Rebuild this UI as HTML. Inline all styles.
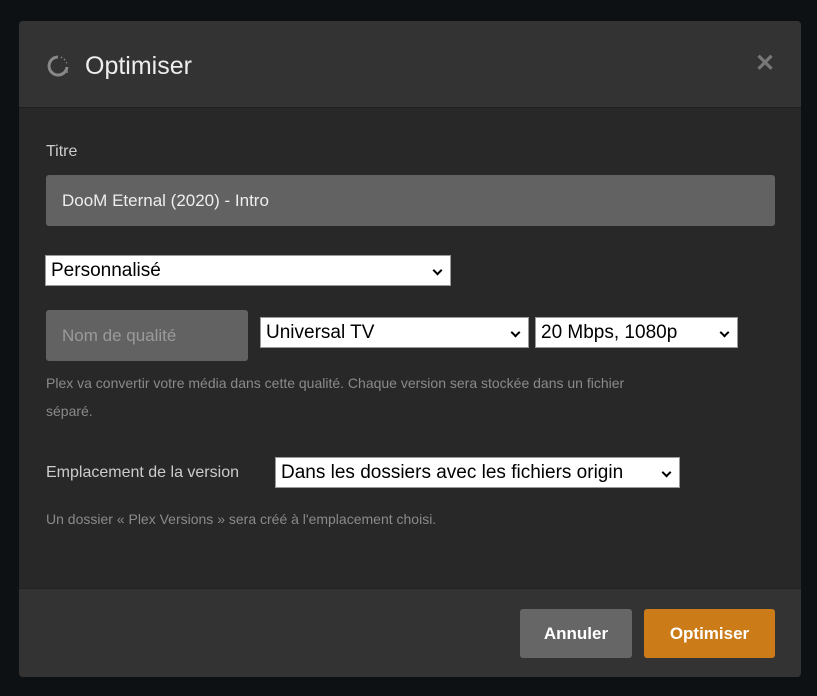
<!DOCTYPE html>
<html><head><meta charset="utf-8"><style>
*{box-sizing:border-box;margin:0;padding:0}
body{width:817px;height:696px;background:#0e1113;font-family:"Liberation Sans",sans-serif;position:relative;overflow:hidden}
.m{position:absolute;left:19px;top:21px;width:782px;height:656px;background:#282828;border-radius:4px;overflow:hidden}
.h{position:absolute;left:0;top:0;width:100%;height:87px;background:#333;border-bottom:1px solid #1f1f1f}
.h .t{position:absolute;left:66px;top:31px;font-size:25px;color:#eee}
.x{position:absolute;left:736px;top:28px;font-size:24px;color:#777;font-weight:bold}
.f{position:absolute;left:0;top:567px;width:100%;height:89px;background:#333;border-top:1px solid #222}
.a{position:absolute;color:#ccc;font-size:16px}
.s{position:absolute;color:#8a8a8a;font-size:14px;line-height:28px}
.sel{position:absolute;background:#fff;border:1px solid #999;color:#000;font-size:19px;padding-left:5px;line-height:29px;height:31px;white-space:nowrap;overflow:hidden}
.sel:after{content:"";position:absolute;right:9px;top:11px;width:5px;height:5px;border-right:2px solid #000;border-bottom:2px solid #000;transform:rotate(45deg)}
.btn{position:absolute;top:20px;height:49px;border-radius:3px;color:#fff;font-weight:bold;font-size:17px;line-height:49px;text-align:center}
</style></head><body>
<div class="m">
 <div class="h">
  <svg style="position:absolute;left:27px;top:33px" width="24" height="24" viewBox="0 0 24 24"><path d="M12 3A9 9 0 1 0 21 13" fill="none" stroke="#888" stroke-width="3"/><path d="M17 18l4-5 1 6z" fill="#888"/><path d="M15 4l1-1M18 6l1-1M20 9l1-.5" stroke="#888" stroke-width="1.5"/></svg>
  <div class="t">Optimiser</div>
  <div class="x">✕</div>
 </div>
 <div class="a" style="left:27px;top:122px">Titre</div>
 <div style="position:absolute;left:27px;top:154px;width:729px;height:51px;background:#626262;border-radius:3px;color:#eee;font-size:17px;line-height:51px;padding-left:16px">DooM Eternal (2020) - Intro</div>
 <div class="sel" style="left:26px;top:234px;width:406px">Personnalisé</div>
 <div style="position:absolute;left:27px;top:289px;width:202px;height:51px;background:#626262;border-radius:3px;color:#9a9a9a;font-size:17px;line-height:51px;padding-left:16px">Nom de qualité</div>
 <div class="sel" style="left:241px;top:296px;width:269px">Universal TV</div>
 <div class="sel" style="left:516px;top:296px;width:203px">20 Mbps, 1080p</div>
 <div class="s" style="left:27px;top:348px;width:590px">Plex va convertir votre média dans cette qualité. Chaque version sera stockée dans un fichier séparé.</div>
 <div class="a" style="left:27px;top:443px">Emplacement de la version</div>
 <div class="sel" style="left:256px;top:436px;width:405px;padding-right:20px">Dans les dossiers avec les fichiers origin</div>
 <div class="s" style="left:27px;top:484px">Un dossier « Plex Versions » sera créé à l'emplacement choisi.</div>
 <div class="f">
  <div class="btn" style="left:501px;width:112px;background:#666">Annuler</div>
  <div class="btn" style="left:625px;width:131px;background:#cc7b19">Optimiser</div>
 </div>
</div>
</body></html>
